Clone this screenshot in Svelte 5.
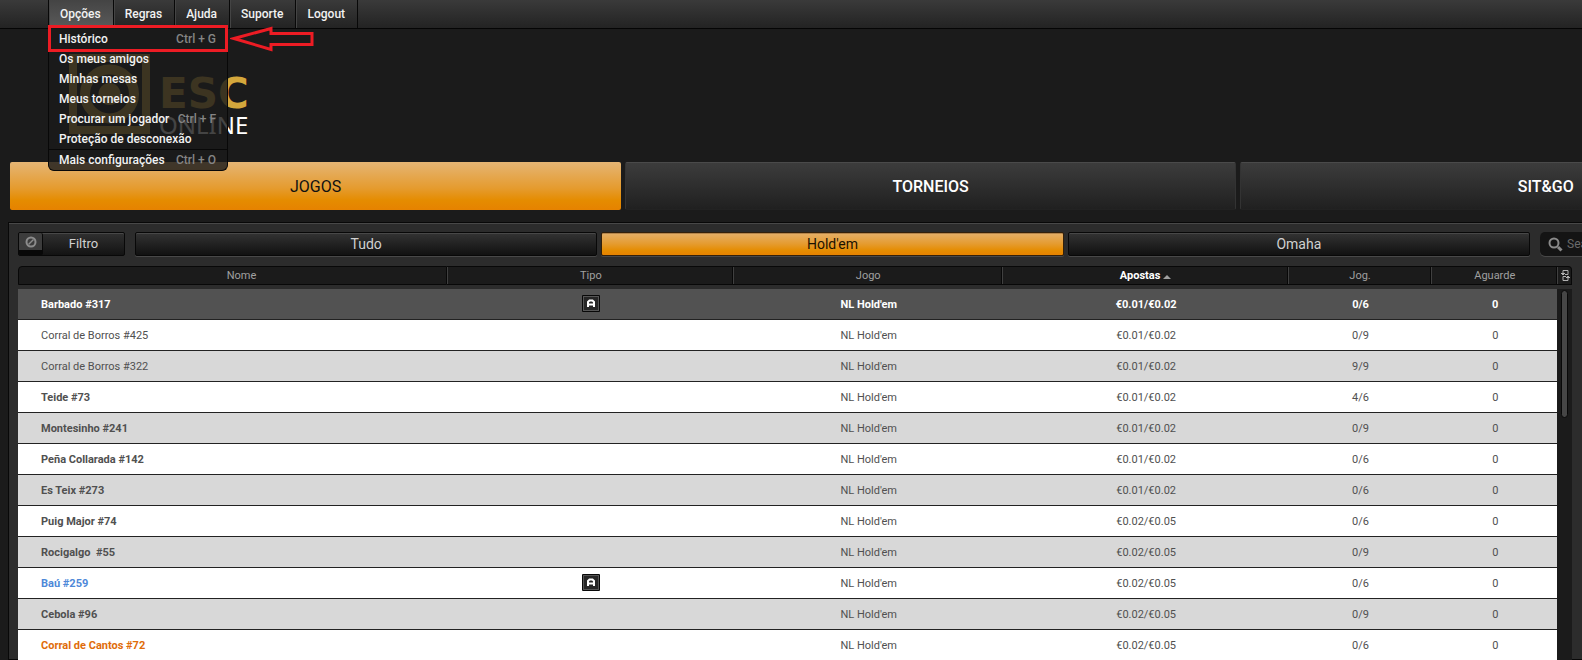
<script>
  const menu = ['Opções', 'Regras', 'Ajuda', 'Suporte', 'Logout'];
  const options = [
    { label: 'Histórico', key: 'Ctrl + G', marked: true },
    { label: 'Os meus amigos' },
    { label: 'Minhas mesas' },
    { label: 'Meus torneios' },
    { label: 'Procurar um jogador', key: 'Ctrl + F' },
    { label: 'Proteção de desconexão' },
    { label: 'Mais configurações', key: 'Ctrl + O', split: true }
  ];
  const sections = ['JOGOS', 'TORNEIOS', 'SIT&GO'];
  const games = ['Tudo', "Hold'em", 'Omaha'];
  const columns = ['Nome', 'Tipo', 'Jogo', 'Apostas', 'Jog.', 'Aguarde'];
  const low = '€0.01/€0.02';
  const high = '€0.02/€0.05';
  const rows = [
    { name: 'Barbado #317', stakes: low, seats: '0/6', kind: 'selected', auto: true },
    { name: 'Corral de Borros #425', stakes: low, seats: '0/9', kind: 'plain' },
    { name: 'Corral de Borros #322', stakes: low, seats: '9/9', kind: 'plain' },
    { name: 'Teide #73', stakes: low, seats: '4/6' },
    { name: 'Montesinho #241', stakes: low, seats: '0/9' },
    { name: 'Peña Collarada #142', stakes: low, seats: '0/6' },
    { name: 'Es Teix #273', stakes: low, seats: '0/6' },
    { name: 'Puig Major #74', stakes: high, seats: '0/6' },
    { name: 'Rocigalgo  #55', stakes: high, seats: '0/9' },
    { name: 'Baú #259', stakes: high, seats: '0/6', kind: 'blue', auto: true },
    { name: 'Cebola #96', stakes: high, seats: '0/9' },
    { name: 'Corral de Cantos #72', stakes: high, seats: '0/6', kind: 'orange' }
  ];
</script>

<div class="app">
  <header>
    <nav class="menubar">
      {#each menu as item, i}
        <div class="slot">
          <button class="menu-item" class:open={i === 0}>{item}</button>
          {#if i === 0}
            <div class="dropdown">
              {#each options as o}
                <button class="option" class:marked={o.marked} class:split={o.split}>
                  <span>{o.label}</span>
                  {#if o.key}<kbd>{o.key}</kbd>{/if}
                </button>
              {/each}
              <svg class="arrow" width="86" height="28" viewBox="0 0 86 28" fill="none" stroke="#ed1c24" stroke-width="3">
                <path d="M4 13.500L41 3.500V8.500H82V19.500H41V24.500Z" />
              </svg>
            </div>
          {/if}
        </div>
      {/each}
    </nav>
  </header>

  <div class="brand">
    <svg width="81" height="80" viewBox="0 0 81 80" fill="none" stroke="#d4a73c">
      <rect x="4" y="4" width="73" height="72" stroke-width="8" />
      <circle cx="40.500" cy="40" r="24.500" stroke-width="10" />
      <circle cx="40.500" cy="40" r="11" fill="#d4a73c" stroke="none" />
    </svg>
    <div class="wordmark"><strong>ESC</strong><span>ONLINE</span></div>
  </div>

  <nav class="sections">
    {#each sections as s, i}
      <button class:active={i === 0}>{s}</button>
    {/each}
  </nav>

  <main>
    <div class="tools">
      <button class="filter">
        <span class="toggle">
          <svg width="12" height="12" viewBox="0 0 12 12" fill="none" stroke="#8c8c8c" stroke-width="2">
            <circle cx="6" cy="6" r="4.500" /><path d="M3.500 8.500L8.500 3.500" stroke-width="1.500" />
          </svg>
        </span>
        <span class="filter-text">Filtro</span>
      </button>
      <div class="games">
        {#each games as g, i}
          <button class:active={i === 1}>{g}</button>
        {/each}
      </div>
      <label class="search">
        <svg width="15" height="15" viewBox="0 0 15 15" fill="none" stroke="#8a8a8a">
          <circle cx="6" cy="6" r="4.500" stroke-width="2" /><path d="M10 10L13.500 13.500" stroke-width="3" />
        </svg>
        <input type="text" placeholder="Search" />
      </label>
    </div>

    <table>
      <colgroup>
        <col class="c-name" /><col class="c-type" /><col class="c-game" /><col class="c-type" />
        <col class="c-seats" /><col class="c-wait" /><col class="c-bar" />
      </colgroup>
      <thead>
        <tr>
          {#each columns as c}
            <th><div class="head" class:sorted={c === 'Apostas'}>{c}{#if c === 'Apostas'}<i></i>{/if}</div></th>
          {/each}
          <th>
            <div class="head">
              <svg width="9" height="13" viewBox="0 0 9 13" fill="none" stroke="#b0b0b0">
                <path d="M2 5V1.500H7V5.500H4M7 8V11.500H2V7.500H5" />
                <path d="M0 4.500H4M1 5.500H3M5 8.500H9M6 7.500H8" />
              </svg>
            </div>
          </th>
        </tr>
      </thead>
      <tbody>
        {#each rows as r, i}
          <tr class={r.kind}>
            <td class="name">{r.name}</td>
            <td>
              {#if r.auto}
                <svg class="badge" width="18" height="18" viewBox="0 0 18 18">
                  <rect width="18" height="17" rx="1" fill="#080808" />
                  <rect x="1.500" y="1.500" width="15" height="14" fill="#262626" stroke="#555" />
                  <path d="M6 12V7L7.500 5.500H10.500L12 7V12M6 9.500H12" fill="none" stroke="#fff" stroke-width="2" />
                </svg>
              {/if}
            </td>
            <td>NL Hold'em</td>
            <td>{r.stakes}</td>
            <td>{r.seats}</td>
            <td>0</td>
            {#if i === 0}
              <td class="track" rowspan={rows.length}><div class="thumb"></div></td>
            {/if}
          </tr>
        {/each}
      </tbody>
    </table>
  </main>
</div>

<style>
  :global(body) {
    margin: 0;
    background: #1b1b1b;
  }
  .app {
    height: 100vh;
    overflow: hidden;
    display: flex;
    flex-direction: column;
    background: #1b1b1b;
    font-family: Roboto, 'Liberation Sans', sans-serif;
    color: #fff;
  }
  button {
    font: inherit;
    color: inherit;
    border: 0;
    padding: 0;
    background: none;
    white-space: nowrap;
  }
  .menubar {
    display: flex;
    height: 28px;
    padding-left: 48px;
    background: linear-gradient(#3a3a3a, #232323);
    border-bottom: 1px solid #050505;
    font-size: 12px;
    font-weight: 500;
    color: #f2f2f2;
  }
  .slot {
    position: relative;
    display: flex;
    border-left: 1px solid #080808;
  }
  .slot:last-child {
    border-right: 1px solid #080808;
  }
  .menu-item {
    padding: 0 12px 0 10px;
    border-left: 1px solid #444;
  }
  .menu-item.open {
    background: linear-gradient(#444, #5a5a5a);
  }
  .dropdown {
    position: absolute;
    z-index: 2;
    top: 28px;
    left: -1px;
    width: 178px;
    border: 1px solid #080808;
    border-top: 0;
    border-radius: 0 0 6px 6px;
    background: rgba(27, 27, 27, 0.82);
    padding-bottom: 1px;
  }
  .option {
    display: flex;
    align-items: center;
    justify-content: space-between;
    width: 100%;
    height: 20px;
    padding: 0 11px 0 10px;
  }
  .option.split {
    border-top: 1px solid #080808;
  }
  .option.marked {
    height: 27px;
    width: 180px;
    margin: -3px -1px;
    padding: 0 9px 0 8px;
    border: 3px solid #ed1c24;
    position: relative;
  }
  kbd {
    font: inherit;
    color: #858585;
  }
  .arrow {
    position: absolute;
    left: 181px;
    top: -3px;
  }
  .brand {
    display: flex;
    gap: 9px;
    height: 80px;
    margin: 25px 0 28px 69px;
  }
  .wordmark {
    display: flex;
    flex-direction: column;
    padding-top: 20px;
  }
  .wordmark strong {
    font-family: 'DejaVu Sans', sans-serif;
    font-size: 42px;
    line-height: 40px;
    color: #d4a73c;
  }
  .wordmark span {
    margin-top: -3px;
    font-family: 'Noto Sans', sans-serif;
    font-size: 24px;
    line-height: 28px;
  }
  .sections {
    display: flex;
    gap: 4px;
    padding-left: 10px;
    flex: none;
  }
  .sections button {
    flex: 0 0 calc(39% - 2px);
    box-sizing: border-box;
    height: 48px;
    border-radius: 2px;
    border: 1px solid #333;
    border-top-color: #4a4a4a;
    border-bottom-color: #222;
    background: linear-gradient(#3c3c3c, #202020);
    font-size: 16px;
    font-weight: 500;
  }
  .sections button.active {
    border: 0;
    background: linear-gradient(#e5b574, #e59b2e 55%, #e58c00 80%, #e68200);
    color: #111;
    font-weight: 400;
  }
  main {
    flex: 1;
    min-height: 0;
    margin: 12px 0 0 8px;
    border: 1px solid #080808;
    border-right: 0;
    box-shadow: inset 0 1px #484848;
    background: #2c2c2c;
    padding: 9px 0 0 9px;
  }
  .tools {
    display: flex;
    gap: 10px;
    height: 24px;
    margin-bottom: 10px;
    color: #d0d0d0;
  }
  .filter {
    display: flex;
    width: 107px;
    box-sizing: border-box;
    border: 1px solid #080808;
    border-radius: 2px;
    background: linear-gradient(#303030, #131313);
    font-size: 13px;
    box-shadow: inset 0 1px #484848;
  }
  .toggle {
    display: flex;
    align-items: center;
    justify-content: center;
    width: 23px;
    height: 17px;
    border: solid #080808;
    border-width: 0 1px 5px 0;
    background: #3c3c3c;
    border-radius: 2px;
  }
  .filter-text {
    flex: 1;
    line-height: 22px;
  }
  .games {
    display: flex;
    flex: 1;
    gap: 4px;
  }
  .games button {
    flex: 1;
    border: 1px solid #080808;
    border-radius: 2px;
    background: linear-gradient(#333, #111);
    box-shadow: inset 0 1px #484848, 0 1px #484848;
    font-size: 14px;
  }
  .games button.active {
    background: linear-gradient(#e5b06a, #e59b2e 50%, #e58c00 80%, #e68200);
    box-shadow: inset 0 1px #b5854a, 0 1px #484848;
    border-color: #33200a;
    color: #1a1200;
  }
  .search {
    display: flex;
    align-items: center;
    gap: 4px;
    flex: 0 0 34px;
    overflow: hidden;
    padding-left: 8px;
    border-radius: 5px 0 0 5px;
    background: #141414;
    box-shadow: 0 1px #484848;
  }
  .search svg {
    flex: none;
  }
  .search input {
    width: 150px;
    flex: none;
    border: 0;
    padding: 0;
    background: none;
    font: 12px Roboto, sans-serif;
    color: #d0d0d0;
  }
  .search input::placeholder {
    color: #6a6a6a;
    opacity: 1;
  }
  table {
    width: calc(100% - 10px);
    table-layout: fixed;
    border-spacing: 0;
    font-size: 11px;
    color: #505050;
    text-align: center;
  }
  .c-name { width: 27.6%; }
  .c-type { width: 18.4%; }
  .c-game { width: 17.3%; }
  .c-seats { width: 9.2%; }
  .c-bar { width: 15px; }
  th {
    padding: 0 0 4px;
    font-weight: 400;
    color: #a0a0a0;
  }
  .head {
    display: flex;
    align-items: center;
    justify-content: center;
    box-sizing: border-box;
    height: 19px;
    padding-left: 3px;
    border: solid #080808;
    border-width: 1px 1px 1px 0;
    background: #1b1b1b;
    box-shadow: inset 1px 0 #404040;
  }
  .head.sorted {
    color: #fff;
    font-weight: 700;
  }
  .head i {
    margin: 3px 0 0 3px;
    border: 4px solid transparent;
    border-top: 0;
    border-bottom-color: #a0a0a0;
  }
  th:first-child .head {
    border-left-width: 1px;
    border-radius: 4px 0 0 0;
    box-shadow: none;
    padding-left: 18px;
  }
  th:last-child .head {
    border-radius: 0 4px 0 0;
  }
  td {
    height: 30px;
    padding: 0 0 0 3px;
    background: #fff;
    border-bottom: 1px solid #222;
  }
  tr:nth-child(odd) td {
    background: #d8d8d8;
  }
  tr.selected td {
    background: #525252;
    color: #fff;
    font-weight: 700;
  }
  td.name {
    padding-left: 23px;
    text-align: left;
    font-weight: 700;
    white-space: pre;
  }
  .plain td.name { font-weight: 400; }
  .blue td.name { color: #4d88d8; }
  .orange td.name { color: #e06c0a; }
  .badge {
    display: block;
    margin: 0 auto;
  }
  tr.selected td.track {
    padding: 0;
    background: #1b1b1b;
    vertical-align: top;
    border: 0;
  }
  .thumb {
    box-sizing: border-box;
    width: 7px;
    height: 128px;
    margin: 1px auto 0 4px;
    border: 1px solid #080808;
    border-radius: 4px;
    background: #464646;
  }
</style>
